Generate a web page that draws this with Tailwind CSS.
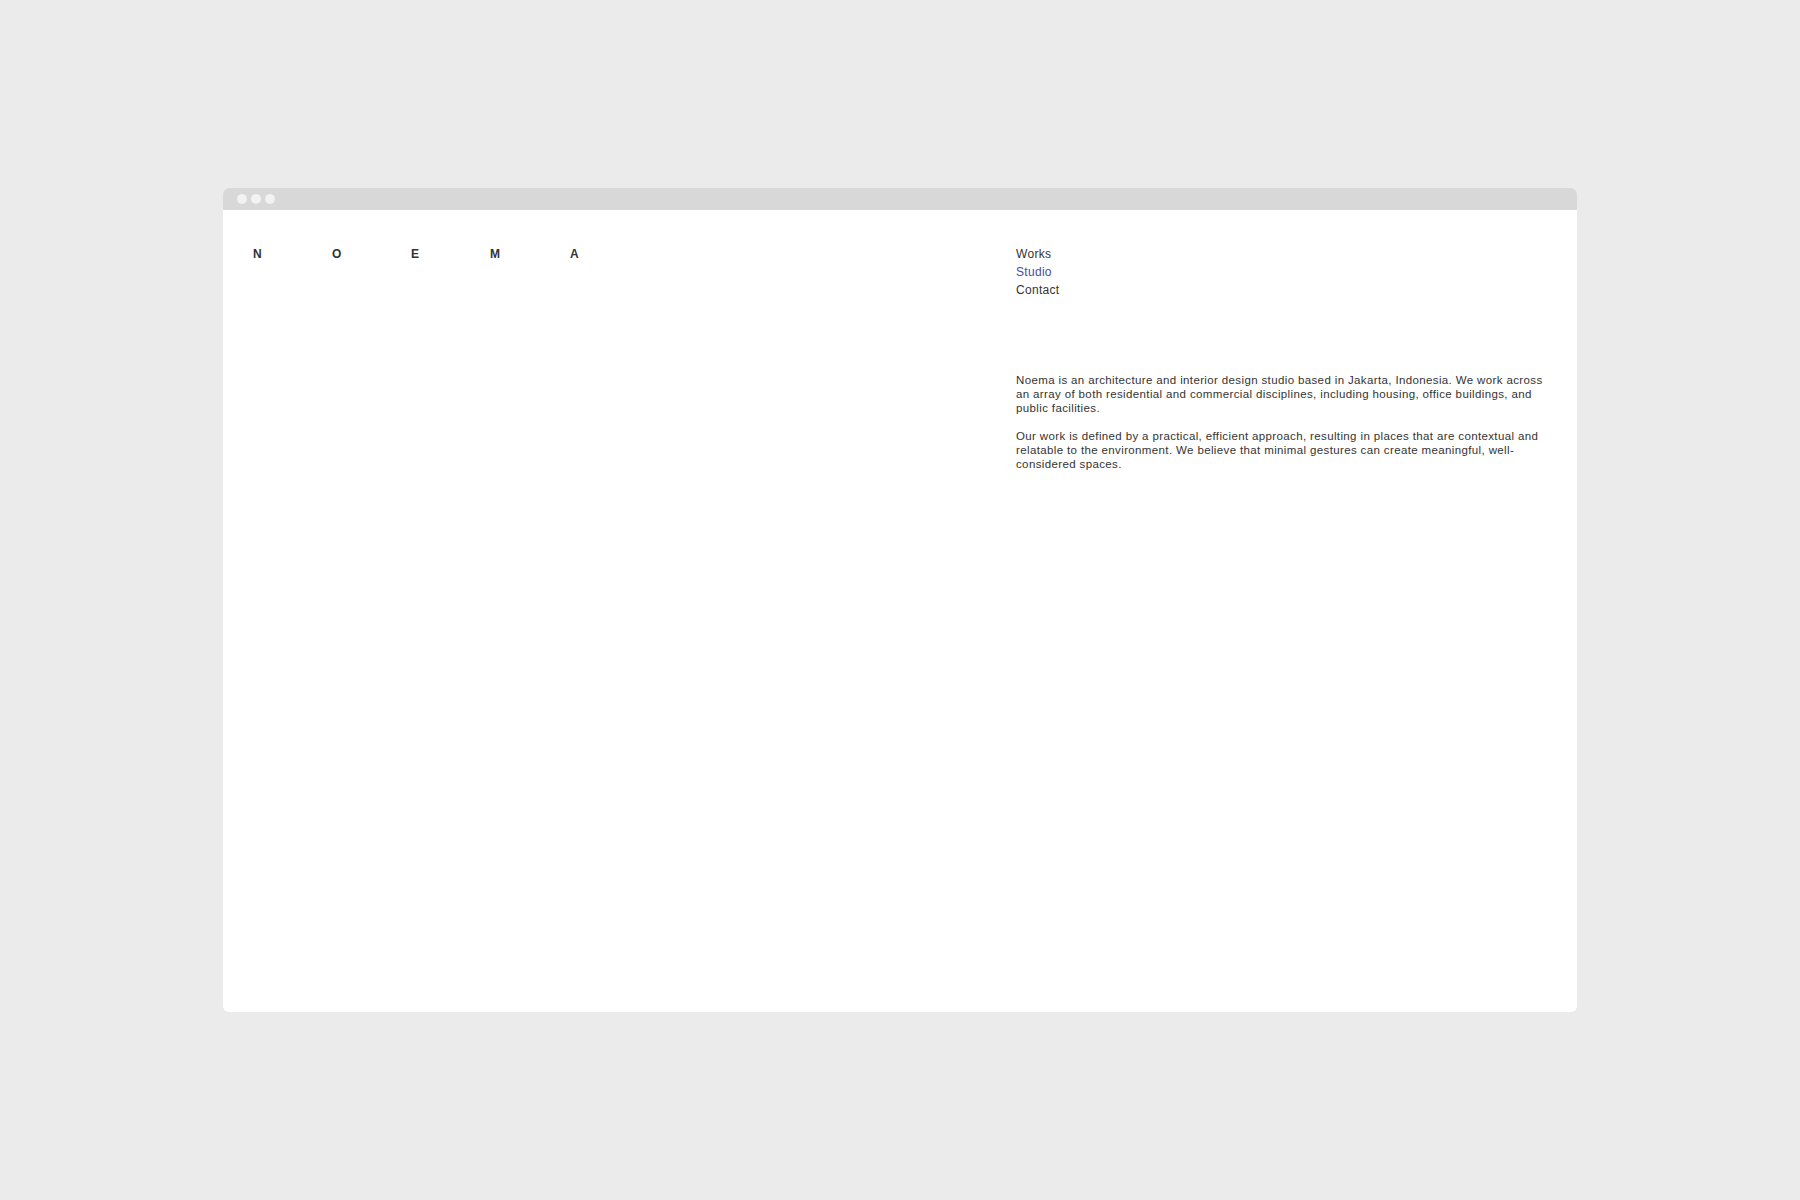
<!doctype html>
<html><head><script src="https://cdn.jsdelivr.net/npm/@tailwindcss/browser@4"></script></head>
<body class="bg-[#ebebeb] font-['Liberation_Sans',sans-serif]">
<div class="w-[1800px] h-[1200px] pt-[188px] pl-[223px]">
  <div class="w-[1354px] h-[824px] bg-white rounded-[6px] overflow-hidden flex flex-col">
    <div class="h-[22px] bg-[#d8d8d8] flex items-center gap-[4px] pl-[14px]">
      <span class="w-[10px] h-[10px] rounded-full bg-[#f2f2f2]"></span>
      <span class="w-[10px] h-[10px] rounded-full bg-[#f2f2f2]"></span>
      <span class="w-[10px] h-[10px] rounded-full bg-[#f2f2f2]"></span>
    </div>
    <div class="flex pt-[35px]">
      <div class="w-[793px] pl-[30px] flex text-[12px] font-bold text-[#333] leading-[18px]">
        <span class="w-[79px]">N</span><span class="w-[79px]">O</span><span class="w-[79px]">E</span><span class="w-[80px]">M</span><span>A</span>
      </div>
      <div class="w-[535px] text-[#333]">
        <div class="leading-[18px] text-[12px] tracking-[0.3px]"><div>Works</div><div class="text-[#4a4aa5]">Studio</div><div>Contact</div></div>
        <div class="mt-[74px] leading-[14px] text-[11.5px] tracking-[0.37px]">
          <p>Noema is an architecture and interior design studio based in Jakarta, Indonesia. We work across an array of both residential and commercial disciplines, including housing, office buildings, and public facilities.</p>
          <p class="mt-[14px]">Our work is defined by a practical, efficient approach, resulting in places that are contextual and relatable to the environment. We believe that minimal gestures can create meaningful, well-considered spaces.</p>
        </div>
      </div>
    </div>
  </div>
</div>
</body></html>
